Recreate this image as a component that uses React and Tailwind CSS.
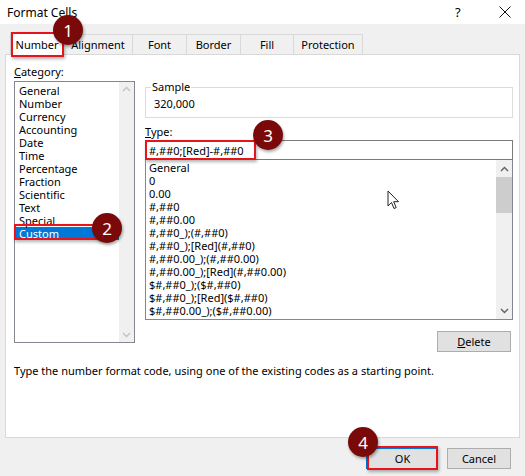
import React from 'react';

const categories = [
  'General', 'Number', 'Currency', 'Accounting', 'Date', 'Time',
  'Percentage', 'Fraction', 'Scientific', 'Text', 'Special', 'Custom',
];

const formats = [
  'General',
  '0',
  '0.00',
  '#,##0',
  '#,##0.00',
  '#,##0_);(#,##0)',
  '#,##0_);[Red](#,##0)',
  '#,##0.00_);(#,##0.00)',
  '#,##0.00_);[Red](#,##0.00)',
  '$#,##0_);($#,##0)',
  '$#,##0_);[Red]($#,##0)',
  '$#,##0.00_);($#,##0.00)',
];

const tabs = ['Alignment', 'Font', 'Border', 'Fill', 'Protection'];

// numbered step marker
const Badge = ({ n, className = '' }) => (
  <div
    className={`absolute w-[30px] h-[30px] rounded-full bg-[#7a0a0a] text-white flex items-center justify-center text-[17px] leading-none shadow-[1px_2px_3px_rgba(0,0,0,0.35)] z-20 ${className}`}
  >
    {n}
  </div>
);

const Chevron = ({ up }) => (
  <svg width="9" height="6" viewBox="0 0 9 6">
    <path
      d={up ? 'M1 5 L4.5 1.5 L8 5' : 'M1 1 L4.5 4.5 L8 1'}
      fill="none"
      stroke="currentColor"
      strokeWidth="1.4"
    />
  </svg>
);

export default function App() {
  return (
    <div className="w-[525px] h-[476px] bg-[#f0f0f0] relative overflow-hidden text-[11px] text-black font-['Noto_Sans','Open_Sans',sans-serif] leading-[13px]">
      {/* Title bar */}
      <div className="h-[24px] bg-white flex items-center pl-[7px]">
        <span className="text-[12px] flex-1">Format Cells</span>
        <span className="text-[13px] w-[12px] mr-[32px]">?</span>
        <svg width="12" height="12" viewBox="0 0 12 12" className="mr-[14px]">
          <path d="M0.5 0.5 L11.5 11.5 M11.5 0.5 L0.5 11.5" stroke="#111" strokeWidth="1" />
        </svg>
      </div>

      {/* Tabs */}
      <div className="flex items-end pl-[10px] mt-[9px] h-[21px] relative z-10">
        <div className="relative w-[54px] h-[23px] bg-white border border-b-0 border-[#d9d9d9] flex items-center justify-center -mb-px">
          Number
          <div className="absolute left-[0px] top-[-1px] w-[53px] h-[25px] border-2 border-[#e8141b] shadow-[1px_2px_3px_rgba(0,0,0,0.3)]" />
          <Badge n="1" className="left-[42px] top-[-18px]" />
        </div>
        {tabs.map((t, i) => (
          <div
            key={t}
            className={`h-[20px] bg-[#f0f0f0] border border-b-0 border-[#d9d9d9] flex items-center justify-center -ml-px ${
              ['w-[70px]', 'w-[55px]', 'w-[55px]', 'w-[54px]', 'w-[70px]'][i]
            }`}
          >
            {t}
          </div>
        ))}
      </div>

      {/* Panel */}
      <div className="mx-[5px] h-[384px] bg-white border border-[#d9d9d9] pl-[8px] pr-[6px] pt-[10px]">
        <div className="flex gap-[10px]">
          {/* Category column */}
          <div className="w-[121px] flex flex-col">
            <div className="h-[14px] mb-[2px]">
              <span className="underline">C</span>ategory:
            </div>
            <div className="relative h-[262px] border border-[#828790] flex">
              <div className="flex-1 pt-[2px] pl-px">
                {categories.map((c) => (
                  <div
                    key={c}
                    className={`h-[13px] pl-[3px] ${c === 'Custom' ? 'bg-[#0078d7] text-white' : ''}`}
                  >
                    {c}
                  </div>
                ))}
              </div>
              <div className="w-[15px] bg-[#f0f0f0] flex flex-col justify-between items-center py-[4px] text-[#c2c2c2]">
                <Chevron up />
                <Chevron />
              </div>
              <div className="absolute left-[-1px] top-[142px] w-[93px] h-[16px] border-2 border-[#e8141b] shadow-[1px_2px_3px_rgba(0,0,0,0.3)]" />
              <Badge n="2" className="left-[77px] top-[131px]" />
            </div>
          </div>

          {/* Type column */}
          <div className="flex-1 flex flex-col pt-[16px]">
            <fieldset className="border border-[#dcdcdc] h-[37px] px-[5px]">
              <legend className="px-[1px] leading-[12px]">Sample</legend>
              <div className="pl-[3px] pt-[4px]">320,000</div>
            </fieldset>
            <div className="mt-[7px] h-[14px] mb-[1px]">
              <span className="underline">T</span>ype:
            </div>
            <div className="relative h-[20px] border border-[#7a7a7a] flex items-center pl-[3px]">
              #,##0;[Red]-#,##0
              <div className="absolute left-[-1px] top-[-1px] w-[111px] h-[20px] border-2 border-[#e8141b] shadow-[1px_2px_3px_rgba(0,0,0,0.3)]" />
              <Badge n="3" className="left-[107px] top-[-21px]" />
            </div>
            <div className="relative h-[160px] border border-[#828790] border-t-0 flex">
              <div className="flex-1 pt-[1px] pl-[3px]">
                {formats.map((f, i) => (
                  <div key={i} className="h-[13px] whitespace-nowrap">
                    {f}
                  </div>
                ))}
              </div>
              <div className="w-[16px] bg-[#f0f0f0] flex flex-col items-center">
                <div className="h-[17px] flex items-center text-[#606060]">
                  <Chevron up />
                </div>
                <div className="w-[16px] h-[36px] bg-[#cdcdcd]" />
                <div className="flex-1" />
                <div className="h-[17px] flex items-center text-[#606060]">
                  <Chevron />
                </div>
              </div>
              {/* mouse pointer */}
              <svg
                className="absolute left-[241px] top-[30px]"
                width="13"
                height="20"
                viewBox="0 0 13 20"
              >
                <path
                  d="M1 1 L1 16 L4.5 12.5 L7 18.5 L9.2 17.6 L6.7 11.7 L11.5 11.7 Z"
                  fill="white"
                  stroke="#222"
                  strokeWidth="1"
                  strokeLinejoin="round"
                />
              </svg>
            </div>
            <div className="flex justify-end mt-[11px] pr-[2px]">
              <button className="w-[74px] h-[21px] bg-[#e1e1e1] border border-[#adadad]">
                <span className="underline">D</span>elete
              </button>
            </div>
          </div>
        </div>
        <div className="mt-[12px]">
          Type the number format code, using one of the existing codes as a starting point.
        </div>
      </div>

      {/* Dialog buttons */}
      <div className="flex justify-end gap-[9px] pr-[14px] mt-[10px]">
        <div className="relative">
          <button className="w-[72px] h-[21px] bg-[#e1e1e1] border border-[#0078d7] border-l-2">
            OK
          </button>
          <div className="absolute left-[1px] top-[-2px] w-[71px] h-[24px] border-2 border-[#e8141b] shadow-[1px_2px_3px_rgba(0,0,0,0.3)]" />
          <Badge n="4" className="left-[-18px] top-[-21px]" />
        </div>
        <button className="w-[64px] h-[21px] bg-[#e1e1e1] border border-[#adadad]">
          Cancel
        </button>
      </div>
    </div>
  );
}
